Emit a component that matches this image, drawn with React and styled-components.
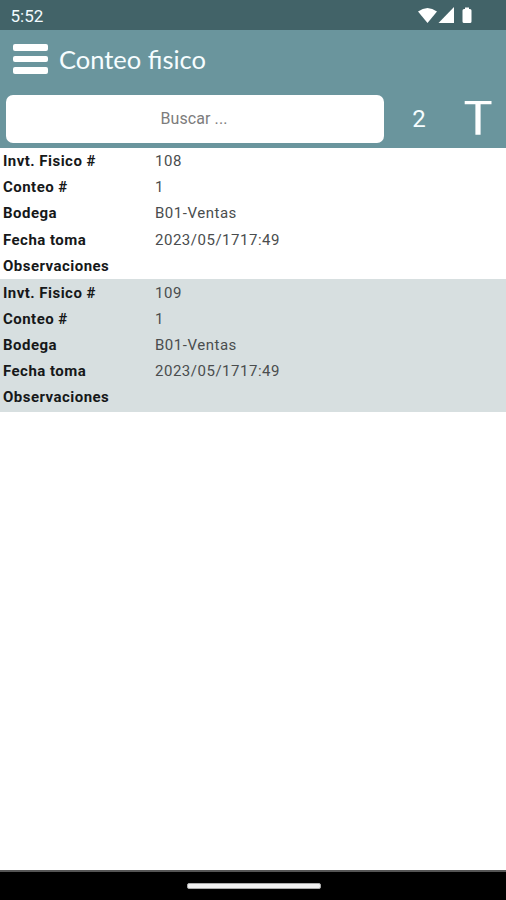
import React from "react";
import styled, { createGlobalStyle } from "styled-components";

const GlobalStyle = createGlobalStyle`
  * { box-sizing: border-box; }
  body { margin: 0; background: #fff; }
`;

const Screen = styled.div`
  display: flex;
  flex-direction: column;
  width: 100%;
  height: 100vh;
  overflow: hidden;
  background: #fff;
  font-family: Roboto, sans-serif;
`;

const StatusBar = styled.div`
  display: flex;
  flex: none;
  align-items: center;
  justify-content: space-between;
  height: 30px;
  padding: 2px 33px 0 10.5px;
  background: #426368;
  color: #f2fbff;
`;

const Clock = styled.span`
  font-size: 17px;
  line-height: 20px;
`;

const StatusIcons = styled.svg`
  display: block;
  width: 55px;
  height: 18px;
  fill: #fff;
`;

const Header = styled.header`
  flex: none;
  height: 118px;
  background: #6a959d;
  color: #f6fdff;
`;

const TitleBar = styled.div`
  display: flex;
  align-items: center;
  height: 58px;
  padding-left: 12.5px;
  gap: 11.5px;
`;

const MenuButton = styled.button`
  display: flex;
  flex-direction: column;
  gap: 5px;
  width: 35px;
  padding: 0;
  border: 0;
  background: none;
`;

const MenuLine = styled.span`
  height: 6.4px;
  border-radius: 2px;
  background: #fff;
`;

const Title = styled.h1`
  margin: 0;
  font: 400 25.5px/30px Lato, sans-serif;
  font-variant-ligatures: common-ligatures;
`;

const SearchBar = styled.div`
  display: grid;
  grid-template-columns: 378px 70px 48px;
  align-items: center;
  height: 60px;
  padding: 1px 0 0 6px;
`;

const SearchInput = styled.input`
  height: 48px;
  padding: 0 2px 0 0;
  border: 0;
  border-radius: 7px;
  background: #fff;
  font: 400 16px/20px Roboto, sans-serif;
  letter-spacing: 0.1px;
  text-align: center;
  &::placeholder { color: #7c7c7c; opacity: 1; }
`;

const Count = styled.span`
  font-size: 24px;
  line-height: 28px;
  text-align: center;
`;

const TextIcon = styled.svg`
  display: block;
  width: 28px;
  height: 36px;
  margin-left: 10px;
  fill: #fff;
`;

const List = styled.main`
  flex: 1;
`;

const Record = styled.dl`
  display: grid;
  grid-template-columns: 152px 1fr;
  grid-auto-rows: 26.2px;
  align-items: center;
  height: ${(p) => (p.$shaded ? 133 : 131)}px;
  margin: 0;
  padding: ${(p) => (p.$shaded ? 0.6 : 0)}px 3px;
  background: ${(p) => (p.$shaded ? "#d7dfe0" : "#fff")};
  font-size: 15px;
  line-height: 20px;
`;

const Label = styled.dt`
  color: #161819;
  font-weight: 700;
  letter-spacing: 0.47px;
`;

const Value = styled.dd`
  margin: 0;
  color: #4a4d4e;
  letter-spacing: 0.52px;
`;

const NavigationBar = styled.footer`
  display: flex;
  flex: none;
  align-items: center;
  justify-content: center;
  height: 30px;
  padding-left: 1px;
  border-top: 2px solid #555;
  background: #000;
`;

const HomeHandle = styled.span`
  width: 134px;
  height: 6px;
  border: 1px solid #aaa;
  border-radius: 2px;
  background: #f0f0f0;
`;

const records = [
  { number: "108", count: "1", store: "B01-Ventas", date: "2023/05/1717:49", notes: "" },
  { number: "109", count: "1", store: "B01-Ventas", date: "2023/05/1717:49", notes: "" },
];

const fields = [
  ["number", "Invt. Fisico #"],
  ["count", "Conteo #"],
  ["store", "Bodega"],
  ["date", "Fecha toma"],
  ["notes", "Observaciones"],
];

export default function App() {
  return (
    <Screen>
      <GlobalStyle />
      <StatusBar>
        <Clock>5:52</Clock>
        <StatusIcons viewBox="0 0 55 18">
          <path d="M0 4.5Q9.5-2.5 19 4.5L9.5 16Z" />
          <path d="M20.5 16L36 0V16Z" />
          <path d="M47 .5h4V2h1q1.500 0 1.500 1.500v11q0 1.500-1.500 1.500h-6q-1.500 0-1.500-1.500v-11Q44.500 2 46 2h1Z" />
        </StatusIcons>
      </StatusBar>
      <Header>
        <TitleBar>
          <MenuButton aria-label="Menu">
            <MenuLine />
            <MenuLine />
            <MenuLine />
          </MenuButton>
          <Title>Conteo fisico</Title>
        </TitleBar>
        <SearchBar>
          <SearchInput placeholder="Buscar ..." />
          <Count>{records.length}</Count>
          <TextIcon viewBox="0 0 28 36">
            <path d="M.7-.9H27.500V3.200H16.600V33.700H11.400V3.200H.7Z" />
          </TextIcon>
        </SearchBar>
      </Header>
      <List>
        {records.map((record, i) => (
          <Record key={record.number} $shaded={i % 2 === 1}>
            {fields.map(([key, label]) => (
              <React.Fragment key={key}>
                <Label>{label}</Label>
                <Value>{record[key]}</Value>
              </React.Fragment>
            ))}
          </Record>
        ))}
      </List>
      <NavigationBar>
        <HomeHandle />
      </NavigationBar>
    </Screen>
  );
}
